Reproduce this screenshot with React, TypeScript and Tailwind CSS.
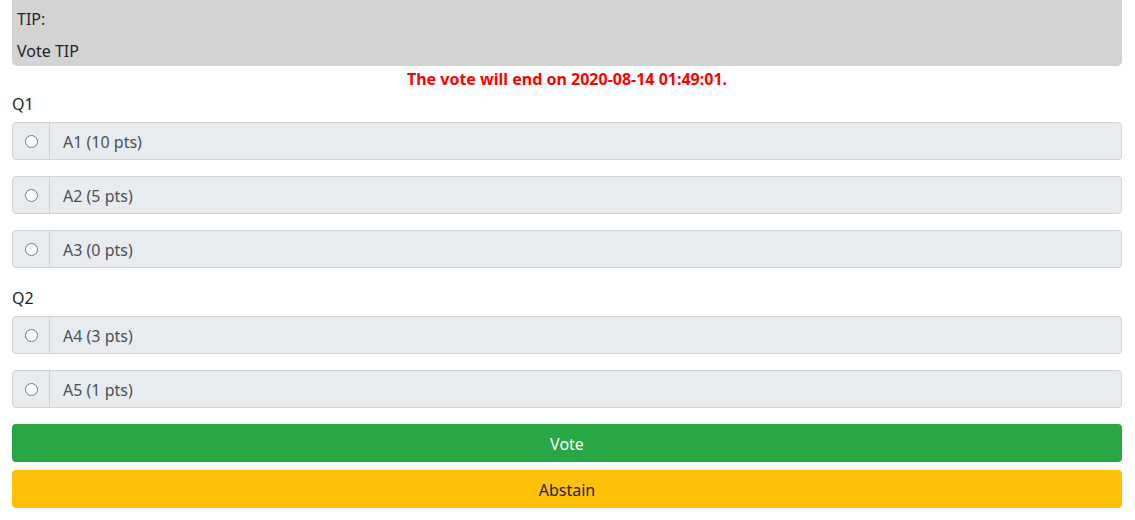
import React from "react";

const questions = [
  { title: "Q1", answers: ["A1 (10 pts)", "A2 (5 pts)", "A3 (0 pts)"] },
  { title: "Q2", answers: ["A4 (3 pts)", "A5 (1 pts)"] },
];

export default function App() {
  return (
    <div className="bg-white min-h-[520px] pl-3 pr-[13px] text-[16px] leading-6 text-[#212529] font-['Noto_Sans',sans-serif]">
      {/* Tip box */}
      <div className="bg-[#d3d3d3] rounded-b-[5px] px-[5px] pt-[7px] pb-[3px]">
        <p className="mb-2">TIP:</p>
        <p>Vote TIP</p>
      </div>

      <p className="h-6 pt-px text-center font-bold text-[#ff0000]">
        The vote will end on 2020-08-14 01:49:01.
      </p>

      {questions.map((q) => (
        <div key={q.title}>
          <div className="h-6 pt-[2px] mb-2">{q.title}</div>
          {q.answers.map((a) => (
            <label
              key={a}
              className="flex h-[38px] mb-4 rounded bg-[#e9ecef] border border-[#ced4da] cursor-pointer"
            >
              <span className="w-[37px] flex items-center justify-center border-r border-[#ced4da]">
                <input type="radio" name={q.title} className="w-[13px] h-[13px] m-0" />
              </span>
              <span className="flex items-center pl-[13px] pt-[2px] text-[#495057]">{a}</span>
            </label>
          ))}
        </div>
      ))}

      <button className="block w-full h-[38px] pt-[2px] rounded bg-[#28a745] text-white mb-2">
        Vote
      </button>
      <button className="block w-full h-[38px] pt-[2px] rounded bg-[#ffc107] text-[#212529]">
        Abstain
      </button>
    </div>
  );
}
